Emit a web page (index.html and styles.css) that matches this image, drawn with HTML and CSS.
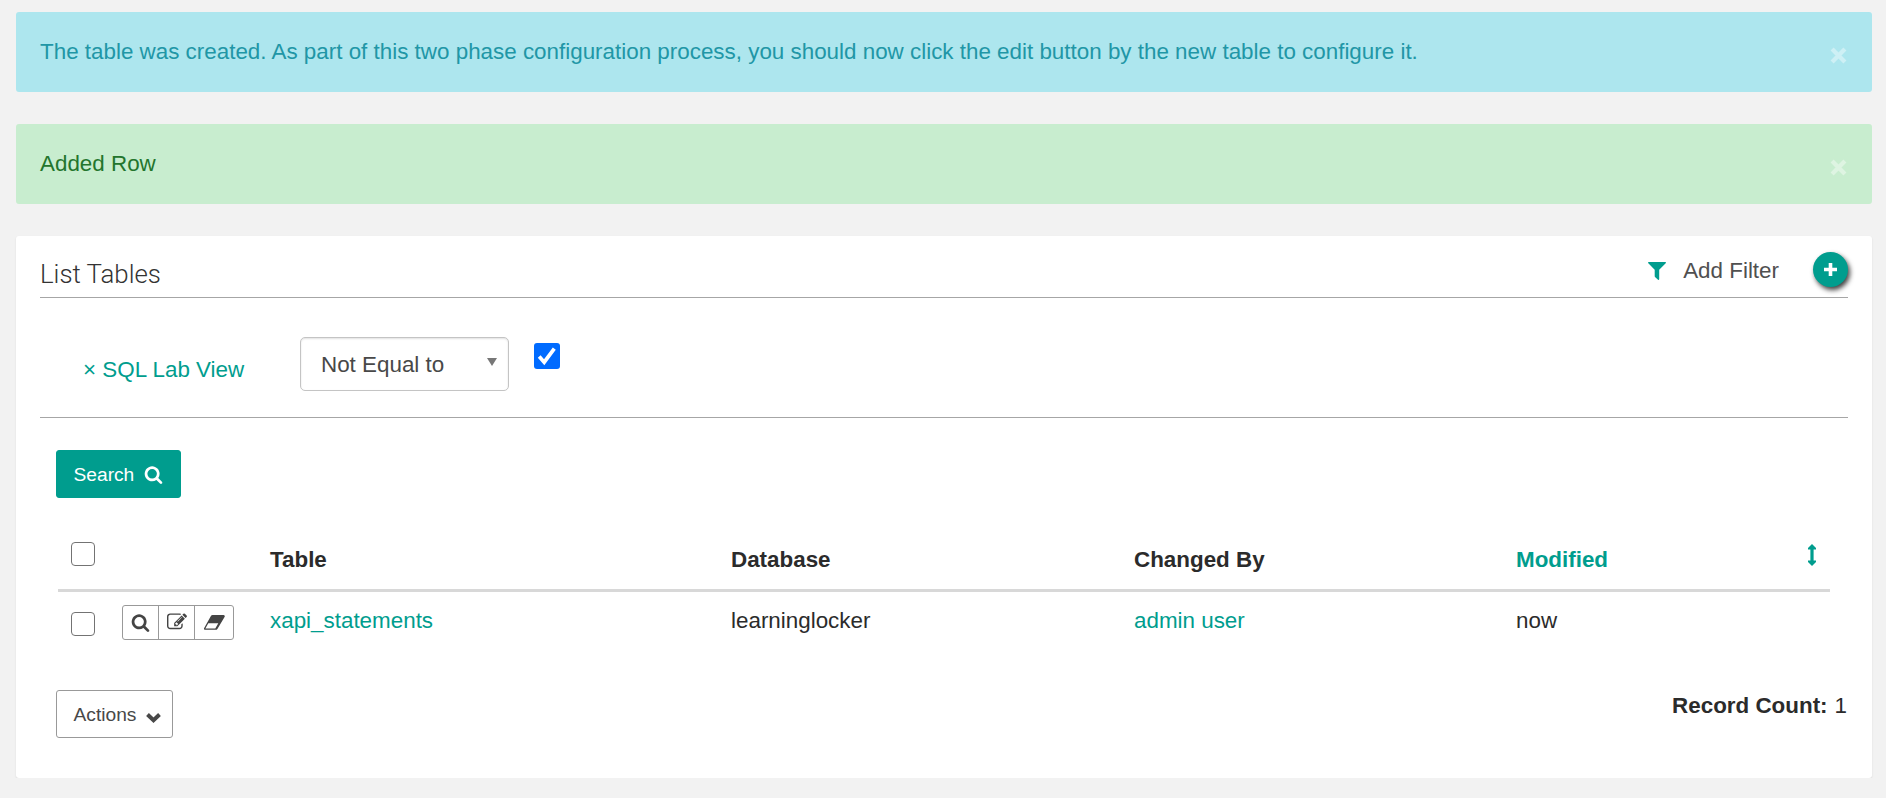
FILE: index.html
```html
<!DOCTYPE html>
<html lang="en">
<head>
<meta charset="utf-8">
<title>List Tables</title>
<link rel="stylesheet" href="styles.css">
</head>
<body>
<svg class="defs" aria-hidden="true">
  <symbol id="search" viewBox="0 0 1792 1792"><path fill="currentColor" d="M1216 832q0-185-131.5-316.5T768 384 451.5 515.5 320 832t131.5 316.5T768 1280t316.5-131.5T1216 832zm512 832q0 52-38 90t-90 38q-54 0-90-38l-343-342q-179 124-399 124-143 0-273.5-55.5t-225-150-150-225T64 832t55.5-273.5 150-225 225-150T768 128t273.5 55.5 225 150 150 225T1472 832q0 220-124 399l343 343q37 37 37 90z"/></symbol>
  <symbol id="close" viewBox="0 0 18 18"><path fill="none" stroke="currentColor" stroke-width="4.6" d="M2.2 2.2 15.8 15.8M15.8 2.2 2.2 15.8"/></symbol>
</svg>
<div class="alert alert-info">
  <span>The table was created. As part of this two phase configuration process, you should now click the edit button by the new table to configure it.</span>
  <svg class="close"><use href="#close"/></svg>
</div>
<div class="alert alert-success">
  <span>Added Row</span>
  <svg class="close"><use href="#close"/></svg>
</div>
<main class="panel">
  <header class="panel-head">
    <h1 class="title">List Tables</h1>
    <div class="tools">
      <svg class="funnel" viewBox="0 0 18 18"><path fill="currentColor" d="M.6 0h16.8q1 .4.3 1.2L11.2 7.7v9.6q-.3 1-1.2.5L7 14.9q-.3-.3-.3-.7V7.7L.3 1.2Q-.3.4.6 0z"/></svg>
      <span class="add-filter">Add Filter</span>
      <a class="add"><svg class="plus" viewBox="0 0 13 13"><path fill="none" stroke="currentColor" stroke-width="3.6" d="M6.5 0v13M0 6.5h13"/></svg></a>
    </div>
  </header>
  <section class="filters">
    <a class="remove">× SQL Lab View</a>
    <div class="select"><span>Not Equal to</span><svg class="caret" viewBox="0 0 10 8"><path fill="#777" d="M0 0h10L5 8z"/></svg></div>
    <span class="check check-on"><svg class="tick" viewBox="0 0 26 26"><path fill="none" stroke="#fff" stroke-width="3.7" d="m5.2 13.600 5 5.600L20.300 5.600"/></svg></span>
  </section>
  <div class="search-row"><button class="btn btn-primary">Search <svg class="icon-search"><use href="#search"/></svg></button></div>
  <table class="list">
    <colgroup><col class="c-check"><col class="c-tools"><col class="c-table"><col class="c-db"><col class="c-user"><col></colgroup>
    <thead>
      <tr><th><span class="check"></span></th><th></th><th>Table</th><th>Database</th><th>Changed By</th>
      <th><div class="sortable"><span>Modified</span><svg class="sort" viewBox="0 0 8 22"><path fill="currentColor" d="M4 0 8 4V5.400H5.600v11.200H8V18L4 22 0 18v-1.400h2.400V5.400H0V4z"/></svg></div></th></tr>
    </thead>
    <tbody>
      <tr>
        <td><span class="check"></span></td>
        <td><div class="group">
          <a class="tool"><svg class="icon-sm"><use href="#search"/></svg></a>
          <a class="tool"><svg class="icon-edit" viewBox="0 0 1792 1792"><path fill="currentColor" d="M888 1184l116-116-152-152-116 116v56h96v96h56zm440-720q-16-16-33 1l-350 350q-17 17-1 33t33-1l350-350q17-17 1-33zm80 594v190q0 119-84.500 203.500t-203.500 84.500h-832q-119 0-203.500-84.500t-84.500-203.500v-832q0-119 84.500-203.500t203.500-84.500h832q63 0 117 25 15 7 18 23 3 17-9 29l-49 49q-14 14-32 8-23-6-45-6h-832q-66 0-113 47t-47 113v832q0 66 47 113t113 47h832q66 0 113-47t47-113v-126q0-13 9-22l64-64q15-15 35-7t20 29zm-96-738l288 288-672 672h-288v-288zm444 132l-92 92-288-288 92-92q28-28 68-28t68 28l152 152q28 28 28 68t-28 68z"/></svg></a>
          <a class="tool tool-last"><svg class="icon-eraser" viewBox="0 0 21 15"><path fill="currentColor" d="M8.600 0h11q1.600.3 1.100 1.700L13.400 13.900q-.7.8-1.700.9h-11Q-.6 14.300.2 12.900L6.900.9Q7.500.1 8.600 0zM4.300 8.300 1.500 13.200q-.2.4.2.400h9.600l3-5.300z"/></svg></a>
        </div></td>
        <td><a>xapi_statements</a></td><td>learninglocker</td><td><a>admin user</a></td><td>now</td>
      </tr>
    </tbody>
  </table>
  <footer class="foot">
    <button class="btn btn-default">Actions <svg class="chevron" viewBox="0 0 15 10"><path fill="none" stroke="currentColor" stroke-width="4" d="M1.500 1.500 7.500 7.200 13.500 1.500"/></svg></button>
    <div class="count"><strong>Record Count:</strong><span>1</span></div>
  </footer>
</main>
</body>
</html>
```
FILE: styles.css
```css
* { box-sizing: border-box; }
body {
  margin: 0;
  padding: 12px 14px 0 16px;
  background: #f2f2f2;
  color: #2b2b2b;
  font: 22.4px/32px "Liberation Sans", Arial, sans-serif;
}
svg { display: block; flex: none; }
a { color: #009d8e; }
.defs { width: 0; height: 0; position: absolute; }
.alert {
  display: flex;
  justify-content: space-between;
  height: 80px;
  margin-bottom: 32px;
  padding: 24px 25px 0 24px;
  border-radius: 3px;
}
.alert-info { background: #ade6ee; color: #2196a6; }
.alert-success { background: #c8edcf; color: #23752d; }
.close { width: 17px; height: 17px; margin-top: 11px; color: rgba(255, 255, 255, .4); }
.panel {
  height: 542px;
  padding: 0 24px;
  background: #fff;
  border-radius: 3px;
  box-shadow: 0 1px 2px rgba(0, 0, 0, .1);
}
.panel-head {
  display: flex;
  justify-content: space-between;
  height: 62px;
  border-bottom: 1px solid #a6a6a6;
}
.title {
  margin: 22px 0 0;
  color: #333;
  font: 300 25.8px/32px Roboto, "Liberation Sans", sans-serif;
}
.tools { display: flex; height: 35px; margin-top: 16px; }
.funnel { width: 18px; height: 18px; margin: 10px 17px 0 0; color: #009d8e; }
.add-filter { margin: 3px 34px 0 0; color: #505050; }
.add {
  display: grid;
  place-items: center;
  width: 35px;
  height: 35px;
  border-radius: 50%;
  background: #009d8e;
  color: #fff;
  box-shadow: 2px 3px 5px rgba(0, 0, 0, .75);
}
.plus { width: 13px; height: 13px; margin-bottom: 1px; }
.filters {
  display: flex;
  height: 120px;
  padding: 39px 0 0 43px;
  border-bottom: 1px solid #a6a6a6;
}
.remove { width: 217px; margin-top: 17px; }
.select {
  display: flex;
  justify-content: space-between;
  width: 209px;
  height: 54px;
  padding: 11px 11px 0 20px;
  border: 1px solid #c4c4c4;
  border-radius: 5px;
  box-shadow: inset 0 1px 2px rgba(0, 0, 0, .12);
  color: #484848;
}
.caret { width: 10px; height: 8px; margin-top: 9px; }
.check {
  display: block;
  width: 24px;
  height: 24px;
  border: 1.5px solid #737373;
  border-radius: 4px;
}
.check-on { width: 26px; height: 26px; margin: 6px 0 0 25px; border: 0; border-radius: 3px; background: #006bff; }
.tick { width: 26px; height: 26px; }
.search-row { padding: 32px 0 0 16px; }
.btn {
  display: flex;
  align-items: center;
  height: 48px;
  padding: 1px 16.5px 0;
  border: 1px solid #999;
  border-radius: 3px;
  background: #fff;
  color: #484848;
  font: 19.2px/28px "Liberation Sans", Arial, sans-serif;
}
.btn-primary { width: 125px; background: #009d8e; border-color: #009d8e; color: #fff; }
.icon-search { width: 19px; height: 19px; margin-left: 10px; }
.list {
  width: 1772px;
  margin: 32px 0 0 18px;
  border-collapse: separate;
  border-spacing: 0;
  table-layout: fixed;
  text-align: left;
}
.c-check { width: 52px; }
.c-tools { width: 148px; }
.c-table { width: 461px; }
.c-db { width: 403px; }
.c-user { width: 382px; }
.list th { height: 62px; padding: 14px 12px 0; border-bottom: 3px solid #d8d8d8; vertical-align: top; }
.list td { height: 62px; padding: 13px 12px 0; vertical-align: top; }
.list th .check { margin: -2px 0 0 1px; }
.list td .check { margin: 7px 0 0 1px; }
.sortable { display: flex; justify-content: space-between; color: #009d8e; }
.sort { width: 8px; height: 22px; margin: 0 2px 0 0; }
.group {
  display: flex;
  width: 112px;
  height: 35px;
  border: 1px solid #999;
  border-radius: 3px;
}
.tool { display: grid; place-items: center; width: 36px; border-right: 1px solid #999; color: #444; }
.tool-last { width: 38px; border-right: 0; }
.icon-sm { width: 19px; height: 19px; }
.icon-edit { width: 20px; height: 20px; margin-bottom: 1px; }
.icon-eraser { width: 21px; height: 15px; }
.foot { display: flex; justify-content: space-between; padding: 36px 1px 0 16px; }
.btn-default { width: 117px; }
.chevron { width: 15px; height: 10px; margin: 6px 0 0 10px; }
.count { display: flex; gap: 7px; }
```
